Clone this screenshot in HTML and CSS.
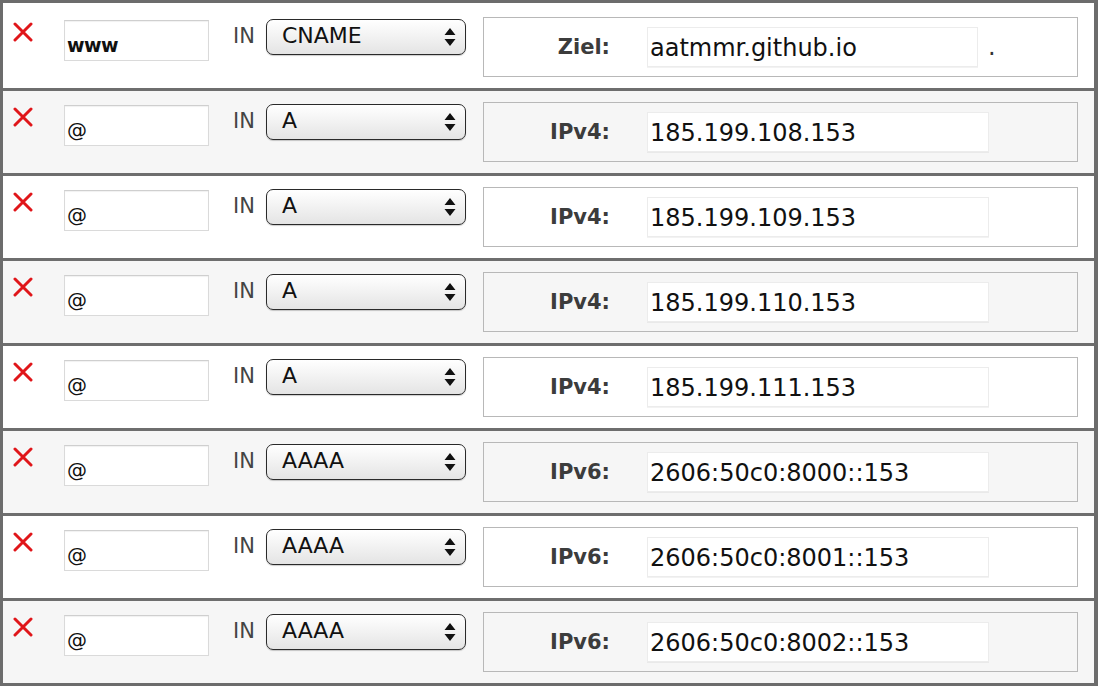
FILE: index.html
```html
<!DOCTYPE html>
<html lang="de">
<head>
<meta charset="utf-8">
<title>DNS-Einträge</title>
<link rel="stylesheet" href="styles.css">
</head>
<body>
<div class="records">
  <div class="rec odd">
    <span class="del"><svg viewBox="0 0 22 20" width="22" height="20"><path d="M3 2 L19 18 M19 2 L3 18" stroke="#e0161a" stroke-width="3" stroke-linecap="round"/></svg></span>
    <input class="name bold" value="www">
    <span class="cls">IN</span>
    <div class="sel"><span class="sel-val">CNAME</span><svg class="arr" viewBox="0 0 12 18" width="12" height="18"><path d="M6 0 L11.5 7 L0.5 7 Z M6 18 L11.5 11 L0.5 11 Z" fill="#111"/></svg></div>
    <div class="target">
      <span class="lbl">Ziel:</span>
      <input class="val short" value="aatmmr.github.io">
      <span class="dot">.</span>
    </div>
  </div>
  <div class="rec even">
    <span class="del"><svg viewBox="0 0 22 20" width="22" height="20"><path d="M3 2 L19 18 M19 2 L3 18" stroke="#e0161a" stroke-width="3" stroke-linecap="round"/></svg></span>
    <input class="name" value="@">
    <span class="cls">IN</span>
    <div class="sel"><span class="sel-val">A</span><svg class="arr" viewBox="0 0 12 18" width="12" height="18"><path d="M6 0 L11.5 7 L0.5 7 Z M6 18 L11.5 11 L0.5 11 Z" fill="#111"/></svg></div>
    <div class="target">
      <span class="lbl">IPv4:</span>
      <input class="val" value="185.199.108.153">
    </div>
  </div>
  <div class="rec odd">
    <span class="del"><svg viewBox="0 0 22 20" width="22" height="20"><path d="M3 2 L19 18 M19 2 L3 18" stroke="#e0161a" stroke-width="3" stroke-linecap="round"/></svg></span>
    <input class="name" value="@">
    <span class="cls">IN</span>
    <div class="sel"><span class="sel-val">A</span><svg class="arr" viewBox="0 0 12 18" width="12" height="18"><path d="M6 0 L11.5 7 L0.5 7 Z M6 18 L11.5 11 L0.5 11 Z" fill="#111"/></svg></div>
    <div class="target">
      <span class="lbl">IPv4:</span>
      <input class="val" value="185.199.109.153">
    </div>
  </div>
  <div class="rec even">
    <span class="del"><svg viewBox="0 0 22 20" width="22" height="20"><path d="M3 2 L19 18 M19 2 L3 18" stroke="#e0161a" stroke-width="3" stroke-linecap="round"/></svg></span>
    <input class="name" value="@">
    <span class="cls">IN</span>
    <div class="sel"><span class="sel-val">A</span><svg class="arr" viewBox="0 0 12 18" width="12" height="18"><path d="M6 0 L11.5 7 L0.5 7 Z M6 18 L11.5 11 L0.5 11 Z" fill="#111"/></svg></div>
    <div class="target">
      <span class="lbl">IPv4:</span>
      <input class="val" value="185.199.110.153">
    </div>
  </div>
  <div class="rec odd">
    <span class="del"><svg viewBox="0 0 22 20" width="22" height="20"><path d="M3 2 L19 18 M19 2 L3 18" stroke="#e0161a" stroke-width="3" stroke-linecap="round"/></svg></span>
    <input class="name" value="@">
    <span class="cls">IN</span>
    <div class="sel"><span class="sel-val">A</span><svg class="arr" viewBox="0 0 12 18" width="12" height="18"><path d="M6 0 L11.5 7 L0.5 7 Z M6 18 L11.5 11 L0.5 11 Z" fill="#111"/></svg></div>
    <div class="target">
      <span class="lbl">IPv4:</span>
      <input class="val" value="185.199.111.153">
    </div>
  </div>
  <div class="rec even">
    <span class="del"><svg viewBox="0 0 22 20" width="22" height="20"><path d="M3 2 L19 18 M19 2 L3 18" stroke="#e0161a" stroke-width="3" stroke-linecap="round"/></svg></span>
    <input class="name" value="@">
    <span class="cls">IN</span>
    <div class="sel"><span class="sel-val">AAAA</span><svg class="arr" viewBox="0 0 12 18" width="12" height="18"><path d="M6 0 L11.5 7 L0.5 7 Z M6 18 L11.5 11 L0.5 11 Z" fill="#111"/></svg></div>
    <div class="target">
      <span class="lbl">IPv6:</span>
      <input class="val" value="2606:50c0:8000::153">
    </div>
  </div>
  <div class="rec odd">
    <span class="del"><svg viewBox="0 0 22 20" width="22" height="20"><path d="M3 2 L19 18 M19 2 L3 18" stroke="#e0161a" stroke-width="3" stroke-linecap="round"/></svg></span>
    <input class="name" value="@">
    <span class="cls">IN</span>
    <div class="sel"><span class="sel-val">AAAA</span><svg class="arr" viewBox="0 0 12 18" width="12" height="18"><path d="M6 0 L11.5 7 L0.5 7 Z M6 18 L11.5 11 L0.5 11 Z" fill="#111"/></svg></div>
    <div class="target">
      <span class="lbl">IPv6:</span>
      <input class="val" value="2606:50c0:8001::153">
    </div>
  </div>
  <div class="rec even">
    <span class="del"><svg viewBox="0 0 22 20" width="22" height="20"><path d="M3 2 L19 18 M19 2 L3 18" stroke="#e0161a" stroke-width="3" stroke-linecap="round"/></svg></span>
    <input class="name" value="@">
    <span class="cls">IN</span>
    <div class="sel"><span class="sel-val">AAAA</span><svg class="arr" viewBox="0 0 12 18" width="12" height="18"><path d="M6 0 L11.5 7 L0.5 7 Z M6 18 L11.5 11 L0.5 11 Z" fill="#111"/></svg></div>
    <div class="target">
      <span class="lbl">IPv6:</span>
      <input class="val" value="2606:50c0:8002::153">
    </div>
  </div>
</div>
</body>
</html>
```

FILE: styles.css
```css
html, body {
  margin: 0;
  padding: 0;
  background: #ffffff;
}

body {
  font-family: "DejaVu Sans", Verdana, sans-serif;
  color: #111;
}

.records {
  width: 1098px;
  box-sizing: border-box;
  border: 3px solid #6c6c6c;
  border-right-width: 4px;
}

.rec {
  display: flex;
  align-items: flex-start;
  box-sizing: border-box;
  height: 85px;
  padding: 11px 16px 0 9px;
  border-top: 3px solid #6e6e6e;
}

.rec:first-child {
  border-top: none;
  height: 85px;
  padding-top: 14px;
}

.odd { background: #ffffff; }
.even { background: #f6f6f6; }

.del {
  display: block;
  width: 22px;
  height: 20px;
  margin-top: 5px;
}

.del svg { display: block; }

input {
  font-family: "DejaVu Sans", Verdana, sans-serif;
  color: #111;
  background: #ffffff;
  border: 1px solid #dadada;
  border-top-color: #cfcfcf;
  box-shadow: inset 0 1px 1px rgba(0, 0, 0, 0.06);
  box-sizing: border-box;
  outline: none;
  margin: 0;
}

.name {
  width: 145px;
  height: 41px;
  margin-top: 3px;
  margin-left: 30px;
  padding: 8px 0 0 2px;
  font-size: 20px;
}

.name.bold {
  font-weight: bold;
  font-size: 19px;
  letter-spacing: -0.5px;
}

.cls {
  margin-left: 24px;
  margin-top: 7px;
  font-size: 21px;
  color: #444;
  width: 24px;
}

.sel {
  display: flex;
  align-items: center;
  justify-content: space-between;
  box-sizing: border-box;
  width: 200px;
  height: 36px;
  margin-left: 9px;
  margin-top: 2px;
  padding: 0 9px 0 15px;
  border: 1.5px solid #2a2a2a;
  border-radius: 7px;
  background: linear-gradient(#ffffff, #f3f3f3 45%, #e4e4e4);
  box-shadow: 0 1px 1px rgba(0, 0, 0, 0.2);
}

.sel-val {
  font-size: 22px;
  color: #111;
  line-height: 1;
  margin-top: -2px;
}

.arr { display: block; }

.target {
  flex: 1;
  display: flex;
  align-items: center;
  box-sizing: border-box;
  height: 60px;
  margin-left: 17px;
  border: 1.5px solid #b8b8b8;
}

.lbl {
  width: 126px;
  text-align: right;
  font-weight: bold;
  font-size: 21px;
  color: #3c3c3c;
  box-sizing: border-box;
}

.val {
  width: 342px;
  height: 40px;
  margin-left: 37px;
  padding: 2px 0 0 2px;
  font-size: 24px;
  border-color: #ececec;
  box-shadow: 0 1px 0 rgba(0, 0, 0, 0.05);
}

.val.short {
  width: 331px;
}

.dot {
  margin-left: 10px;
  font-size: 24px;
  color: #333;
}
```
